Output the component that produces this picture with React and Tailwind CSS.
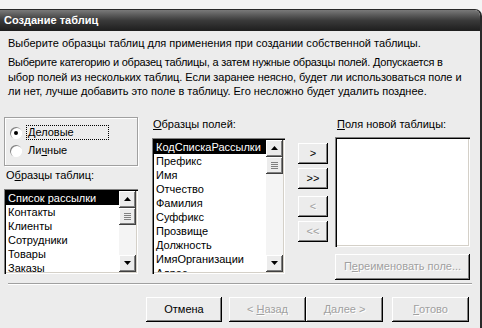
import React from "react";

const font = { fontFamily: '"Liberation Sans", Arial, sans-serif' };

const raised =
  "shadow-[inset_-1px_-1px_0_#000,inset_1px_1px_0_#fff,inset_-2px_-2px_0_#808080]";
const sunken =
  "shadow-[inset_1px_1px_0_#808080,inset_2px_2px_0_#000,inset_-1px_-1px_0_#fff,inset_-2px_-2px_0_#d4d0c8]";

function Btn({ children, className = "", disabled }) {
  return (
    <div
      className={`flex items-center justify-center whitespace-nowrap bg-[#ececec] text-[11px] ${raised} ${disabled ? "text-[#a0a0a0] [text-shadow:1px_1px_0_#fff]" : "text-black"} ${className}`}
    >
      {children}
    </div>
  );
}

function ScrollBar() {
  const b =
    "flex h-[17px] w-[17px] items-center justify-center bg-[#ececec] shadow-[inset_-1px_-1px_0_#404040,inset_1px_1px_0_#fff,inset_-2px_-2px_0_#808080]";
  return (
    <div className="flex h-full w-[17px] flex-col bg-[#f4f4f4]">
      <div className={b}>
        <svg width="7" height="4" viewBox="0 0 7 4"><path d="M3.5 0L7 4H0z" fill="#000" /></svg>
      </div>
      <div className={`${b} flex-col gap-[1px]`}>
        <div className="h-[1px] w-[7px] bg-[#808080]" />
        <div className="h-[1px] w-[7px] bg-[#808080]" />
        <div className="h-[1px] w-[7px] bg-[#808080]" />
        <div className="h-[1px] w-[7px] bg-[#808080]" />
      </div>
      <div className="flex-1" />
      <div className={b}>
        <svg width="7" height="4" viewBox="0 0 7 4"><path d="M0 0H7L3.5 4z" fill="#000" /></svg>
      </div>
    </div>
  );
}

function ListBox({ items, className = "" }) {
  return (
    <div className={`flex bg-white p-[2px] ${sunken} ${className}`}>
      <div className="flex-1 overflow-hidden">
        {items.map((t, i) => (
          <div
            key={t}
            className={`h-[14px] whitespace-nowrap pl-[2px] text-[11px] leading-[14px] ${i === 0 ? "bg-black text-white" : "text-black"}`}
          >
            {t}
          </div>
        ))}
      </div>
      <ScrollBar />
    </div>
  );
}

export default function App() {
  return (
    <div className="h-[328px] w-[482px] overflow-hidden bg-[#f4f4f4]" style={font}>
      <div className="mt-[9px] flex h-[319px] flex-col overflow-hidden rounded-tr-[7px] border-r-2 border-t border-[#2a2a2a] bg-[#ececec]">
        <div className="flex h-[21px] shrink-0 items-center bg-gradient-to-b from-[#7a7a7a] via-[#3a3a3a] to-[#1e1e1e] pl-[4px] text-[11px] font-bold text-white">
          Создание таблиц
        </div>
        <div className="whitespace-nowrap px-[8px] pt-[5px] text-[11px] leading-[14px] text-black">
          Выберите образцы таблиц для применения при создании собственной таблицы.
        </div>
        <div className="whitespace-nowrap px-[8px] pt-[5px] text-[11px] leading-[14.5px] text-black">
          <div className="tracking-[-0.23px]">Выберите категорию и образец таблицы, а затем нужные образцы полей. Допускается в</div>
          <div className="tracking-[-0.06px]">ыбор полей из нескольких таблиц. Если заранее неясно, будет ли использоваться поле и</div>
          <div>ли нет, лучше добавить это поле в таблицу. Его несложно будет удалить позднее.</div>
        </div>
        <div className="mt-[17px] flex h-[164px] shrink-0 pl-[4px]">
          <div className="flex w-[134px] flex-col">
            <div className="mt-[1px] flex h-[49px] flex-col justify-center gap-[4px] border border-[#a0a0a0] pl-[5px] shadow-[inset_1px_1px_0_#fff,1px_1px_0_#fff]">
              <div className="flex items-center gap-[4px] text-[11px]">
                <div className="flex h-[12px] w-[12px] items-center justify-center rounded-full bg-white shadow-[inset_1px_1px_0_#808080,inset_-1px_-1px_0_#fff]">
                  <div className="h-[4px] w-[4px] rounded-full bg-black" />
                </div>
                <span className="w-[83px] border border-dotted border-black pl-[1px] leading-[13px]">
                  <span className="underline">Д</span>еловые
                </span>
              </div>
              <div className="flex items-center gap-[4px] text-[11px]">
                <div className="h-[12px] w-[12px] rounded-full bg-white shadow-[inset_1px_1px_0_#808080,inset_-1px_-1px_0_#fff]" />
                <span className="pl-[2px] leading-[13px]">
                  Ли<span className="underline">ч</span>ные
                </span>
              </div>
            </div>
            <div className="mt-[2px] pl-[2px] text-[11px] leading-[14px]">
              О<span className="underline">б</span>разцы таблиц:
            </div>
            <ListBox
              className="mt-[7px] h-[85px]"
              items={["Список рассылки", "Контакты", "Клиенты", "Сотрудники", "Товары", "Заказы"]}
            />
          </div>
          <div className="ml-[14px] flex w-[133px] flex-col">
            <div className="mt-[1px] pl-[1px] text-[11px] leading-[14px]">
              <span className="underline">О</span>бразцы полей:
            </div>
            <ListBox
              className="mt-[7px] h-[136px]"
              items={[
                "КодСпискаРассылки",
                "Префикс",
                "Имя",
                "Отчество",
                "Фамилия",
                "Суффикс",
                "Прозвище",
                "Должность",
                "ИмяОрганизации",
                "Адрес",
              ]}
            />
          </div>
          <div className="ml-[13px] flex w-[30px] flex-col pt-[27px]">
            <Btn className="h-[21px]">&gt;</Btn>
            <Btn className="mt-[4px] h-[21px]">&gt;&gt;</Btn>
            <Btn className="mt-[7px] h-[21px]" disabled>&lt;</Btn>
            <Btn className="mt-[4px] h-[21px]" disabled>&lt;&lt;</Btn>
          </div>
          <div className="ml-[7px] flex w-[135px] flex-col">
            <div className="mt-[1px] pl-[2px] text-[11px] leading-[14px]">
              <span className="underline">П</span>оля новой таблицы:
            </div>
            <div className={`mt-[6px] h-[110px] bg-white ${sunken}`} />
            <Btn className="mt-[7px] h-[26px]" disabled>
              П<span className="underline">е</span>реименовать поле...
            </Btn>
          </div>
        </div>
        <div className="mx-[8px] mt-[3px] h-[2px] shrink-0 border-t border-b border-t-[#a0a0a0] border-b-white" />
        <div className="mt-[12px] flex shrink-0 pl-[146px]">
          <Btn className="h-[25px] w-[76px]">Отмена</Btn>
          <Btn className="ml-[7px] h-[25px] w-[77px]" disabled>
            &lt;&nbsp;<span className="underline">Н</span>азад
          </Btn>
          <Btn className="h-[25px] w-[77px]" disabled>
            <span className="underline">Д</span>алее&nbsp;&gt;
          </Btn>
          <Btn className="ml-[9px] h-[25px] w-[77px]" disabled>
            <span className="underline">Г</span>отово
          </Btn>
        </div>
      </div>
    </div>
  );
}
